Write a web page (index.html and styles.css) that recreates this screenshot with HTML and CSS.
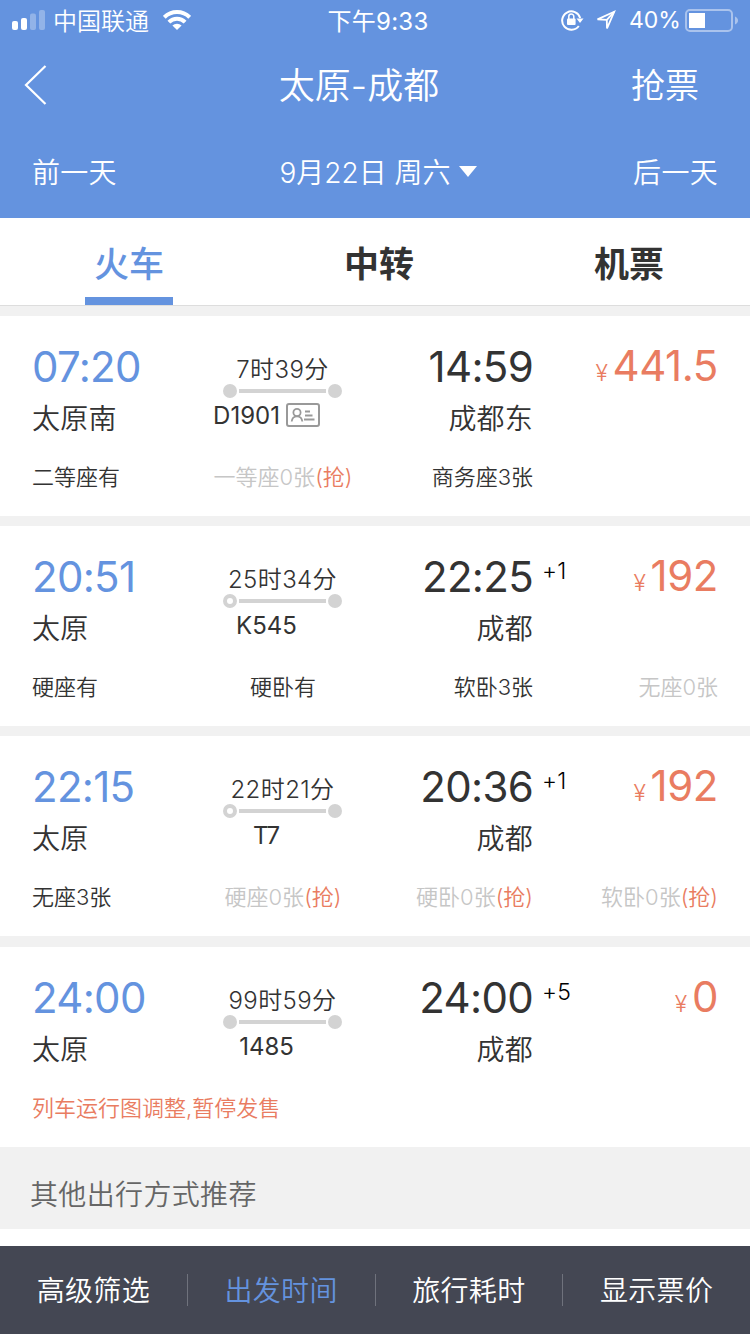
FILE: index.html
```html
<!DOCTYPE html>
<html lang="zh-CN">
<head>
    <meta charset="utf-8">
    <title>太原-成都</title>
    <link rel="stylesheet" href="styles.css">
</head>
<body>
    <header class="header">
        <div class="status">
            <div class="status-left">
                <svg class="signal" width="34" height="22" viewBox="0 0 34 22" fill="#fff">
                    <rect x="0" y="12" width="6" height="9" rx="2"/>
                    <rect x="9" y="9" width="6" height="12" rx="2"/>
                    <rect x="18" y="4.500" width="6" height="16.500" rx="2" opacity=".3"/>
                    <rect x="27" y="1" width="6" height="20" rx="2" opacity=".3"/>
                </svg>
                <span class="carrier">中国联通</span>
                <svg class="wifi" width="28" height="20" viewBox="0 0 28 20" fill="none" stroke="#fff" stroke-width="4">
                    <path d="M1.300 7.300a18 18 0 0 1 25.400 0"/>
                    <path d="M5.900 12.200a11.500 11.500 0 0 1 16.200 0"/>
                    <path d="M14 20l-4.600-4.400a6.500 6.500 0 0 1 9.200 0z" fill="#fff" stroke="none"/>
                </svg>
            </div>
            <div class="clock">下午9:33</div>
            <div class="status-right">
                <svg class="lock" width="24" height="22" viewBox="0 0 24 22" fill="none" stroke="#fff" stroke-width="2">
                    <path d="M17.800 17A9.200 9.200 0 1 1 19.200 9"/>
                    <path d="M15.500 9.500h7l-3.500 4.500z" fill="#fff" stroke="none"/>
                    <rect x="6" y="9.500" width="8.600" height="6.500" rx="1" fill="#fff" stroke="none"/>
                    <path d="M7.800 10V7.500a2.500 2.500 0 0 1 5 0V10" stroke-width="1.500"/>
                </svg>
                <svg class="location" width="22" height="22" viewBox="0 0 22 22" fill="none" stroke="#fff" stroke-width="1.800">
                    <path d="M19.200 2.800L2.500 10.400l9.300.4.200 8.700z"/>
                    <path d="M19.200 2.800l-7.400 8"/>
                </svg>
                <span class="percent">40%</span>
                <svg class="battery" width="54" height="24" viewBox="0 0 54 24" fill="none">
                    <rect x="1" y="1" width="46" height="21" rx="4" stroke="#fff" stroke-opacity=".45" stroke-width="2"/>
                    <rect x="4" y="4" width="16" height="15" fill="#fff"/>
                    <path d="M50 7.500c4 1.500 4 6.500 0 8z" fill="#fff" opacity=".45"/>
                </svg>
            </div>
        </div>
        <div class="navbar">
            <svg class="back" width="24" height="42" viewBox="0 0 24 42" fill="none" stroke="#fff" stroke-width="2.200">
                <path d="M21.500 2L2 21l19.500 19"/>
            </svg>
            <h1 class="title">太原-成都</h1>
            <span class="grab">抢票</span>
        </div>
        <div class="datebar">
            <span class="prev">前一天</span>
            <span class="date">9月22日 周六<i class="caret"></i></span>
            <span class="next">后一天</span>
        </div>
    </header>

    <nav class="tabs">
        <span class="tab active">火车</span>
        <span class="tab">中转</span>
        <span class="tab">机票</span>
    </nav>

    <main class="list">
        <section class="card">
            <div class="trip">
                <div class="from"><div class="time">07:20</div><div class="station">太原南</div></div>
                <div class="middle">
                    <div class="duration">7时39分</div>
                    <div class="line"><i class="dot"></i><i class="bar"></i><i class="dot"></i></div>
                    <div class="number">D1901<svg class="idcard" width="34" height="25" viewBox="0 0 34 25" fill="none" stroke="#999" stroke-width="2">
                        <rect x="1" y="1" width="32" height="22" rx="2"/>
                        <circle cx="11" cy="9.500" r="3.600" stroke-width="1.800"/>
                        <path d="M5.700 18.500c.3-3 2.300-5.200 5.300-5.200s5 2.200 5.300 5.200M19 8.500h5M19 12.500h7.500M18 16.500h10.500" stroke-width="1.800"/>
                    </svg></div>
                </div>
                <div class="to"><div class="time">14:59</div><div class="station">成都东</div></div>
                <div class="price"><span class="yen">¥</span>441.5</div>
            </div>
            <div class="seats">
                <span class="seat">二等座有</span>
                <span class="seat none">一等座0张<em>(抢)</em></span>
                <span class="seat">商务座3张</span>
                <span class="seat"></span>
            </div>
        </section>

        <section class="card">
            <div class="trip">
                <div class="from"><div class="time">20:51</div><div class="station">太原</div></div>
                <div class="middle">
                    <div class="duration">25时34分</div>
                    <div class="line"><i class="dot ring"></i><i class="bar"></i><i class="dot"></i></div>
                    <div class="number">K545</div>
                </div>
                <div class="to"><div class="time">22:25<sup class="days">+1</sup></div><div class="station">成都</div></div>
                <div class="price"><span class="yen">¥</span>192</div>
            </div>
            <div class="seats">
                <span class="seat">硬座有</span>
                <span class="seat">硬卧有</span>
                <span class="seat">软卧3张</span>
                <span class="seat none">无座0张</span>
            </div>
        </section>

        <section class="card">
            <div class="trip">
                <div class="from"><div class="time">22:15</div><div class="station">太原</div></div>
                <div class="middle">
                    <div class="duration">22时21分</div>
                    <div class="line"><i class="dot ring"></i><i class="bar"></i><i class="dot"></i></div>
                    <div class="number">T7</div>
                </div>
                <div class="to"><div class="time">20:36<sup class="days">+1</sup></div><div class="station">成都</div></div>
                <div class="price"><span class="yen">¥</span>192</div>
            </div>
            <div class="seats">
                <span class="seat">无座3张</span>
                <span class="seat none">硬座0张<em>(抢)</em></span>
                <span class="seat none">硬卧0张<em>(抢)</em></span>
                <span class="seat none">软卧0张<em>(抢)</em></span>
            </div>
        </section>

        <section class="card">
            <div class="trip">
                <div class="from"><div class="time">24:00</div><div class="station">太原</div></div>
                <div class="middle">
                    <div class="duration">99时59分</div>
                    <div class="line"><i class="dot"></i><i class="bar"></i><i class="dot"></i></div>
                    <div class="number">1485</div>
                </div>
                <div class="to"><div class="time">24:00<sup class="days">+5</sup></div><div class="station">成都</div></div>
                <div class="price"><span class="yen">¥</span>0</div>
            </div>
            <div class="notice">列车运行图调整,暂停发售</div>
        </section>
    </main>

    <div class="recommend">其他出行方式推荐</div>

    <footer class="toolbar">
        <span class="tool">高级筛选</span>
        <span class="tool active">出发时间</span>
        <span class="tool">旅行耗时</span>
        <span class="tool">显示票价</span>
    </footer>
</body>
</html>
```
FILE: styles.css
```css
* {
    box-sizing: border-box;
}

body {
    margin: 0;
    width: 750px;
    height: 1334px;
    overflow: hidden;
    display: flex;
    flex-direction: column;
    background-color: #fff;
    color: #333;
    font-family: Inter, "Noto Sans CJK SC", sans-serif;
    font-weight: 350;
    white-space: nowrap;
}

svg {
    display: block;
    flex: none;
}

/* header */
.header {
    height: 218px;
    background-color: #6493df;
    color: #fff;
}

.status {
    display: grid;
    grid-template-columns: 250px 1fr 250px;
    align-items: center;
    height: 40px;
    font-size: 24px;
}

.status-left,
.status-right {
    display: flex;
    align-items: center;
}

.status-left {
    padding-left: 12px;
}

.carrier {
    margin: -2px 0 0 7px;
}

.wifi {
    margin-left: 14px;
}

.clock {
    margin-top: -2px;
    padding-left: 6px;
    text-align: center;
    font-weight: 400;
    letter-spacing: .300px;
}

.status-right {
    padding-left: 61px;
}

.location {
    margin-left: 10px;
}

.percent {
    margin-left: 12px;
    width: 51px;
    font-size: 23px;
    font-weight: 400;
}

.battery {
    margin: 2px 0 0 5px;
}

.navbar,
.datebar {
    display: grid;
    grid-template-columns: 200px 1fr 200px;
    align-items: center;
}

.navbar {
    height: 90px;
    font-size: 34px;
}

.back {
    margin-left: 24px;
}

.title {
    margin: -4px 0 0;
    padding-right: 32px;
    text-align: center;
    font-size: 36px;
    font-weight: inherit;
}

.grab {
    margin-top: -4px;
    padding-left: 81px;
}

.datebar {
    height: 82px;
    padding: 0 32px;
    font-size: 28px;
}

.date {
    display: flex;
    align-items: center;
    justify-content: center;
    padding-left: 6px;
}

.caret {
    margin: 1px 0 0 8px;
    border: 9px solid transparent;
    border-top: 11px solid #fff;
    border-bottom: 0;
}

.prev,
.next {
    letter-spacing: .300px;
}

.next {
    text-align: right;
}

/* tabs */
.tabs {
    display: flex;
    height: 88px;
    padding-left: 4px;
    border-bottom: 1px solid #ddd;
}

.tab {
    flex: none;
    width: 250px;
    display: flex;
    flex-direction: column;
    align-items: center;
    padding-top: 13px;
    font-size: 35px;
    font-weight: 700;
    line-height: 66px;
}

.tab.active {
    color: #6493df;
    font-weight: 500;
}

.tab.active::after {
    content: "";
    width: 88px;
    height: 8px;
    background-color: #6493df;
}

/* train list */
.list {
    display: flex;
    flex-direction: column;
    gap: 10px;
    padding-top: 10px;
    background-color: #f1f1f1;
}

.card {
    height: 200px;
    padding: 27px 32px 0;
    background-color: #fff;
}

.card:last-child {
    margin-top: 1px;
}

.trip,
.seats {
    display: grid;
    grid-template-columns: 152px 198px 151px 1fr;
}

.trip {
    height: 116px;
}

.time {
    position: relative;
    height: 48px;
    line-height: 48px;
    font-size: 42px;
    font-weight: 400;
    letter-spacing: -.700px;
}

.from .time {
    color: #6493df;
}

.station {
    height: 57px;
    line-height: 57px;
    font-size: 28px;
    letter-spacing: .200px;
}

.to {
    text-align: right;
}

.days {
    position: absolute;
    left: 100%;
    top: 3px;
    margin-left: 9px;
    line-height: 30px;
    font-size: 23px;
    font-weight: 350;
    letter-spacing: .300px;
    color: #000;
}

.middle {
    display: flex;
    flex-direction: column;
    align-items: center;
    padding: 12px 1px 0 0;
}

.duration {
    height: 29px;
    line-height: 30px;
    font-size: 24px;
    letter-spacing: .400px;
}

.line {
    display: flex;
    align-items: center;
    gap: 2px;
    height: 14px;
}

.dot {
    width: 14px;
    height: 14px;
    border-radius: 50%;
    background-color: #d3d3d3;
}

.ring {
    border: 4px solid #d3d3d3;
    background-color: #fff;
}

.bar {
    width: 87px;
    height: 4px;
    background-color: #d3d3d3;
}

.number {
    display: flex;
    align-items: center;
    margin-right: 32px;
    height: 34px;
    font-size: 24px;
    font-weight: 400;
}

.idcard {
    margin-left: 6px;
}

.price {
    height: 46px;
    line-height: 46px;
    text-align: right;
    font-size: 42px;
    font-weight: 400;
    letter-spacing: -.400px;
    color: #e97c61;
}

.yen {
    margin-right: 5px;
    font-size: 23px;
    font-weight: 350;
}

.seats,
.notice {
    line-height: 36px;
    font-size: 22px;
}

.seat:nth-child(2) {
    text-align: center;
}

.seat:nth-child(n+3) {
    text-align: right;
}

.seat.none {
    color: #c6c6c6;
}

.seat em,
.notice {
    font-style: normal;
    color: #e97c61;
}

.recommend {
    height: 82px;
    padding-left: 30px;
    background-color: #f1f1f1;
    line-height: 96px;
    font-size: 28px;
    letter-spacing: .350px;
    color: #666;
}

/* bottom toolbar */
.toolbar {
    display: flex;
    align-items: center;
    height: 88px;
    margin-top: auto;
    background-color: #444753;
}

.tool {
    flex: 1;
    height: 32px;
    line-height: 35px;
    text-align: center;
    font-size: 28px;
    letter-spacing: .300px;
    color: #fff;
}

.tool + .tool {
    border-left: 1px solid #6f727c;
}

.tool.active {
    color: #6493df;
}
```
